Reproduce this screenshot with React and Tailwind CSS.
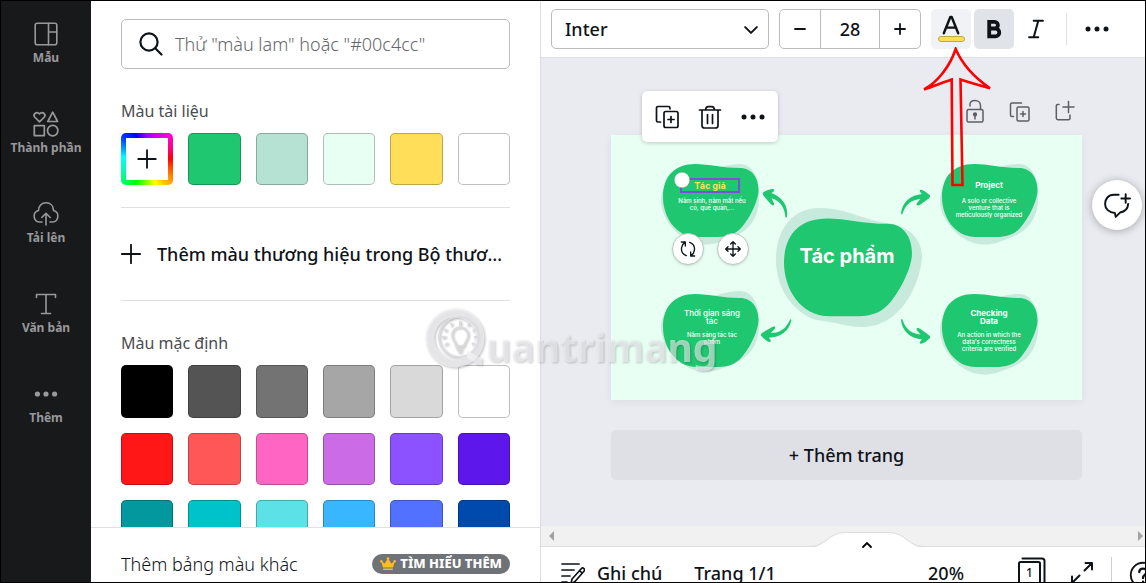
import React from "react";

const documentColors = ["#1fc770", "#b6e2d3", "#e8fff4", "#ffde59", "#ffffff"];

const defaultColors = [
  "#000000", "#545454", "#737373", "#a6a6a6", "#d9d9d9", "#ffffff",
  "#ff1616", "#ff5757", "#ff66c4", "#cb6ce6", "#8c52ff", "#5e17eb",
  "#03989e", "#00c2cb", "#5ce1e6", "#38b6ff", "#5271ff", "#004aad",
];

const Icon = ({ size = 24, stroke = 1.6, className = "", children }) => (
  <svg
    width={size}
    height={size}
    viewBox="0 0 24 24"
    fill="none"
    stroke="currentColor"
    strokeWidth={stroke}
    strokeLinecap="round"
    strokeLinejoin="round"
    className={`shrink-0 ${className}`}
    aria-hidden="true"
  >
    {children}
  </svg>
);

const Dots = ({ size, r = 2.4, gap = 8.8 }) => (
  <Icon size={size} className="overflow-visible">
    <g fill="currentColor" stroke="none">
      <circle cx={12 - gap} cy="12" r={r} />
      <circle cx="12" cy="12" r={r} />
      <circle cx={12 + gap} cy="12" r={r} />
    </g>
  </Icon>
);

const DuplicateIcon = ({ stroke }) => (
  <Icon stroke={stroke}>
    <path d="M5.500 17H3a1.500 1.500 0 0 1-1.500-1.500V3A1.500 1.500 0 0 1 3 1.500h10.500A1.500 1.500 0 0 1 15 3v.8" />
    <rect x="9" y="6.500" width="14" height="16" rx="1.800" />
    <path d="M16 11.500v6M13 14.500h6" />
  </Icon>
);

const navItems = [
  {
    label: "Mẫu",
    icon: (
      <Icon stroke={1.6}>
        <rect x="1.200" y="1.200" width="21.600" height="21.600" rx="2" />
        <path d="M14.500 1.200v21.600M14.500 10h8.300" />
      </Icon>
    ),
  },
  {
    label: "Thành phần",
    icon: (
      <Icon stroke={1.7} className="overflow-visible">
        <path d="M5.500 9.800 0.600 5C-1.300 2.400 2.600-1.400 5.500 1.900 8.400-1.400 12.300 2.400 10.400 5z" />
        <path d="M18.700 0.200 23.600 9.500H13.800z" />
        <rect x="0.300" y="13.600" width="10" height="10" />
        <circle cx="18.700" cy="18.600" r="5.200" />
      </Icon>
    ),
  },
  {
    label: "Tải lên",
    icon: (
      <Icon stroke={1.6} className="overflow-visible">
        <path d="M8 20H5.500a5.800 5.800 0 0 1-1-11.400C4.500 4 7.500 .8 12 .8s7.500 3.200 7.500 7.800a5.800 5.800 0 0 1-1 11.400H16" />
        <path d="M12 23V12M7.800 15.500 12 11.300l4.200 4.200" />
      </Icon>
    ),
  },
  {
    label: "Văn bản",
    icon: (
      <Icon stroke={1.6}>
        <path d="M2.500 5.500V2.500h19v3M12 2.500v19M7.500 21.500h9" />
      </Icon>
    ),
  },
  { label: "Thêm", icon: <Dots r={2.6} gap={8.6} /> },
];

const Sidebar = () => (
  <nav className="w-[90px] shrink-0 bg-[#18191b] text-[#98999b]">
    {navItems.map((item) => (
      <a
        key={item.label}
        href="#"
        className="flex h-[90px] flex-col items-center gap-0.5 pt-[21px] text-[12px] leading-5 font-bold whitespace-nowrap"
      >
        {item.icon}
        {item.label}
      </a>
    ))}
  </nav>
);

const Swatch = ({ color }) => (
  <button
    aria-label={color}
    className="aspect-square rounded-[5px] border border-black/25"
    style={{ backgroundColor: color }}
  />
);

const ColorPanel = () => (
  <section className="flex w-[450px] shrink-0 flex-col border-r border-[#dcdde1] bg-white">
    <div className="min-h-0 flex-1 overflow-hidden px-[30px] pt-[18px]">
      <label className="flex h-[50px] items-center gap-3 rounded-[5px] border border-[#babcbf] px-[17px]">
        <Icon stroke={2.2}>
          <circle cx="10" cy="10" r="8.600" />
          <path d="m16.500 16.500 6 6" />
        </Icon>
        <input
          type="text"
          aria-label="Tìm màu"
          placeholder={'Thử "màu lam" hoặc "#00c4cc"'}
          className="min-w-0 flex-1 text-[18px] font-light outline-none placeholder:text-[#65676b]"
        />
      </label>

      <h2 className="mt-8 text-[16px] leading-5 text-[#4b4c50]">Màu tài liệu</h2>
      <div className="mt-3 grid grid-cols-6 gap-[15px]">
        <button
          aria-label="Thêm màu"
          className="aspect-square rounded-[5px] bg-[conic-gradient(#a000ff,#ff00e0_45deg,#ff0000_90deg,#ff9500_130deg,#ffff00_160deg,#00ff00_205deg,#00ff90_235deg,#00ffff_275deg,#0030ff_315deg,#0000ff_335deg,#a000ff)] p-[5px]"
        >
          <span className="flex h-full items-center justify-center bg-white">
            <Icon size={20} stroke={2.2}>
              <path d="M12 1.500v21M1.500 12h21" />
            </Icon>
          </span>
        </button>
        {documentColors.map((color) => (
          <Swatch key={color} color={color} />
        ))}
      </div>

      <button className="mt-[22px] flex h-[94px] w-full items-center gap-4 border-y border-[#dfe0e2] text-left text-[18px] font-medium">
        <Icon size={20} stroke={2.2}>
          <path d="M12 1v22M1 12h22" />
        </Icon>
        <span className="truncate">Thêm màu thương hiệu trong Bộ thương hiệu</span>
      </button>

      <h2 className="mt-8 text-[16px] leading-5 text-[#4b4c50]">Màu mặc định</h2>
      <div className="mt-3 grid grid-cols-6 gap-[15px]">
        {defaultColors.map((color) => (
          <Swatch key={color} color={color} />
        ))}
      </div>
    </div>

    <div className="flex h-[55px] shrink-0 items-start justify-between border-t border-[#dfe0e2] px-[30px] pt-6">
      <span className="text-[18px] leading-6 font-light">Thêm bảng màu khác</span>
      <button className="mt-0.5 flex h-5 items-center gap-1 rounded-full bg-[#6f7377] px-2 text-[13px] font-extrabold whitespace-nowrap text-white">
        <svg width="16" height="14" viewBox="0 0 16 14" fill="#fdbc1f" aria-hidden="true">
          <path d="M3 10.500 1.200 4.200l3.600 2.200L8 1l3.200 5.400 3.600-2.200L13 10.500zM3.200 11.500h9.600V13H3.200z" />
          <circle cx="8" cy="1.500" r="1.300" />
          <circle cx="1.300" cy="4.200" r="1.200" />
          <circle cx="14.700" cy="4.200" r="1.200" />
        </svg>
        TÌM HIỂU THÊM
      </button>
    </div>
  </section>
);

const Toolbar = () => (
  <header className="relative z-20 flex h-[57px] shrink-0 items-center border-b border-[#dfe0e4] bg-white px-[10px]">
    <div className="relative w-[218px]">
      <select
        aria-label="Phông chữ"
        className="h-10 w-full appearance-none rounded-[5px] border border-[#babcbf] bg-white px-[13px] text-[18px] font-medium"
      >
        <option>Inter</option>
      </select>
      <Icon size={14} stroke={3.4} className="pointer-events-none absolute top-[14px] right-[11px]">
        <path d="m2 7 10 10L22 7" />
      </Icon>
    </div>

    <div className="ml-[10px] flex h-10 w-[142px] rounded-[5px] border border-[#babcbf]">
      <button aria-label="Giảm" className="flex w-10 items-center justify-center">
        <Icon size={12} stroke={3.6}>
          <path d="M2 12h20" />
        </Icon>
      </button>
      <input
        type="text"
        aria-label="Cỡ chữ"
        defaultValue="28"
        className="min-w-0 flex-1 border-x border-[#babcbf] text-center text-[18px] font-medium"
      />
      <button aria-label="Tăng" className="flex w-10 items-center justify-center">
        <Icon size={12} stroke={3.6}>
          <path d="M2 12h20M12 2v20" />
        </Icon>
      </button>
    </div>

    <div className="relative ml-[10px]">
      <button
        aria-label="Màu chữ"
        className="flex size-10 flex-col items-center rounded-[5px] bg-[#f1f2f5] pt-1.5"
      >
        <svg width="18" height="20" viewBox="0 0 18 20" fill="none" stroke="currentColor" strokeWidth="2.400" strokeLinecap="round" strokeLinejoin="round" aria-hidden="true">
          <path d="M1.800 18.300 8.300 2h1.400l6.500 16.300M4.200 12.600h9.600" />
        </svg>
        <span className="mt-px h-1.5 w-[27px] rounded-full border border-[#bfa743] bg-[#ffde59]" />
      </button>
      {/* Callout arrow pointing at the text colour button */}
      <svg
        width="72"
        height="142"
        viewBox="0 0 72 142"
        fill="none"
        stroke="#ff0000"
        strokeWidth="2.600"
        className="pointer-events-none absolute top-[38px] -left-2.5"
        aria-hidden="true"
      >
        <path d="M34.700 2C29 19 17 35 3 42.500 13 39 22 35.500 30.700 32.500L31.500 138H41.500L39.500 32.500C50 36 59 38.500 69 41.200 57 33 42 19 34.700 2z" />
      </svg>
    </div>
    <button aria-label="Đậm" className="ml-[3px] flex size-10 items-center justify-center rounded-[5px] bg-[#e0e3e7]">
      <svg width="18" height="20" viewBox="0 0 18 20" fill="none" stroke="currentColor" strokeWidth="3.800" aria-hidden="true">
        <path d="M4.200 2.900h5.400a3.300 3.300 0 0 1 0 6.600H4.200zM4.200 9.500h6.200a3.900 3.900 0 0 1 0 7.800H4.200z" />
      </svg>
    </button>
    <button aria-label="Nghiêng" className="ml-0.5 flex size-10 items-center justify-center">
      <Icon size={22} stroke={2.2}>
        <path d="M9.500 3h10M4.500 21h10M14.500 3 9.500 21" />
      </Icon>
    </button>
    <span className="mx-[10px] h-8 w-px bg-[#e0e1e4]" />
    <button aria-label="Tùy chọn khác" className="flex h-10 w-10 items-center justify-center">
      <Dots r={2.5} gap={9} />
    </button>
  </header>
);

const Blob = ({ x, y, shadowY = 0 }) => (
  <g transform={`translate(${x} ${y})`}>
    <path
      fill="#c8eadd"
      transform={`translate(0 ${shadowY})`}
      d="M-2 36C-2 20 10 10 40 8 55 4 65 0 77 0 90 0 97 15 96 34 96 52 88 66 70 73 58 78 52 80.500 42 80.500 20 80.500-2 58-2 36z"
    />
    <path
      fill="#1fc770"
      d="M0 33C0 12 12 0 32 0 46 0 60 4 77 4 89 4 95.500 14 95.500 26 95.500 36 88 51 82 59 75 69 68 73 54 73H34C12 73 0 52 0 33z"
    />
  </g>
);

const Arrow = ({ transform }) => (
  <path
    transform={transform}
    fill="#1fc770"
    d="M290 78.500C291 67 300 60 311 59L309.500 57.500C308 55.500 309 54 311 55 314 56 317 58.500 319 60.500 319.500 62 318.500 63 317 64 314 66 310.500 69 307.500 70.500 305.500 71 305 69.500 306 68L309.500 64C301 64.500 295 69 291.800 78Q291 80.500 290 78.500z"
  />
);

const Lines = ({ x, y, step, lines, className }) => (
  <text textAnchor="middle" className={className}>
    {lines.map((line, i) => (
      <tspan key={line} x={x} y={y + i * step}>
        {line}
      </tspan>
    ))}
  </text>
);

const MindMap = () => (
  <svg
    viewBox="0 0 471 265"
    className="block w-full bg-[#e8fff4] font-[Inter,sans-serif] shadow-[0_2px_8px_rgba(0,0,0,0.06)]"
  >
    <Blob x={52} y={29} />
    <Blob x={331} y={29} />
    <Blob x={52} y={159} shadowY={-3} />
    <Blob x={331} y={159} />

    <path
      fill="#c8eadd"
      d="M165 125C165 94 182 73 208 73 237 73 252 86 283 89 303 95 311 108 311 122 309 152 288 192 252 192 235 192 225 187 205 185 180 176 165 152 165 125z"
    />
    <g transform="translate(173 83.500) scale(1.340)">
      <path
        fill="#1fc770"
        d="M0 33C0 12 12 0 32 0 46 0 60 4 77 4 89 4 95.500 14 95.500 26 95.500 36 88 51 82 59 75 69 68 73 54 73H34C12 73 0 52 0 33z"
      />
    </g>

    <Arrow />
    <Arrow transform="matrix(1 0 0 -1 0 263.500)" />
    <Arrow transform="translate(152 58) rotate(14) scale(-1 1) translate(-319 -61)" />
    <Arrow transform="translate(150 200) rotate(5) scale(-1 -1) translate(-319 -61)" />

    <rect x="70" y="44" width="58" height="13" fill="none" stroke="#7d4fd6" strokeWidth="2" />
    <Lines x={99} y={54} step={8} lines={["Tác giả"]} className="fill-[#ffde59] text-[9px] font-bold" />
    <Lines x={101} y={68} step={7} lines={["Năm sinh, năm mất nếu", "có, quê quán,..."]} className="fill-white text-[6px] font-medium" />
    <Lines x={236} y={128} step={8} lines={["Tác phẩm"]} className="fill-white text-[20px] font-bold" />
    <Lines x={101} y={181} step={8} lines={["Thời gian sáng", "tác"]} className="fill-white text-[8px] font-medium" />
    <Lines x={101} y={202} step={7} lines={["Năm sáng tác tác", "phẩm"]} className="fill-white text-[6px] font-medium" />
    <Lines x={378} y={53} step={8} lines={["Project"]} className="fill-white text-[8px] font-bold" />
    <Lines x={378} y={68} step={7} lines={["A solo or collective", "venture that is", "meticulously organized"]} className="fill-white text-[6px] font-medium" />
    <Lines x={378} y={181} step={8} lines={["Checking", "Data"]} className="fill-white text-[8px] font-bold" />
    <Lines x={378} y={202} step={7} lines={["An action in which the", "data's correctness", "criteria are verified"]} className="fill-white text-[6px] font-medium" />
    <circle cx="71" cy="45" r="7.700" fill="#fff" stroke="#000" strokeOpacity="0.15" strokeWidth="0.800" />
  </svg>
);

const roundButton =
  "absolute flex size-8 items-center justify-center rounded-full border border-[#b9c9c2] bg-white shadow-sm";

const Canvas = () => (
  <div className="min-h-0 flex-1 overflow-hidden bg-[#eaebf0] pt-[41px] pr-[63px] pl-[70px]">
    <div className="flex justify-end gap-[21px] pr-[5px] pb-3 text-[#5d5f66]">
      <button aria-label="Khóa">
        <Icon stroke={1.5}>
          <rect x="4" y="10.500" width="16" height="12.500" rx="1.500" />
          <path d="M7 7V5.500C7 3 9 1.500 12 1.500s5.500 2 5.500 5v4M12 17v3" />
          <circle cx="12" cy="15.500" r="1.400" fill="currentColor" />
        </Icon>
      </button>
      <button aria-label="Nhân bản trang">
        <Icon stroke={1.5}>
          <path d="M5.500 17.500H4A1.500 1.500 0 0 1 2.500 16V5.500A1.500 1.500 0 0 1 4 4h9.500" />
          <rect x="9" y="8" width="12" height="14" rx="1.500" />
          <path d="M15 12.500v5M12.500 15h5" />
        </Icon>
      </button>
      <button aria-label="Thêm trang mới">
        <Icon stroke={1.5}>
          <path d="M6 5.500H4.500A1.200 1.200 0 0 0 3.300 6.700V19A1.700 1.700 0 0 0 5 20.700h10.500a1.500 1.500 0 0 0 1.500-1.500V16M15.500 2.500v11M10 8h11" />
        </Icon>
      </button>
    </div>

    <div className="relative">
      <MindMap />
      <div className="absolute -top-11 left-[31px] flex h-[51px] items-center gap-[19px] rounded-[5px] bg-white px-[13px] shadow-[0_1px_4px_rgba(0,0,0,0.2)]">
        <button aria-label="Nhân bản">
          <DuplicateIcon stroke={1.7} />
        </button>
        <button aria-label="Xóa">
          <Icon stroke={1.7}>
            <path d="M1.500 5h21M7.500 5c.3-2 .8-3.300 2.500-3.300h4c1.700 0 2.200 1.300 2.500 3.300M4 5v15.500A2.500 2.500 0 0 0 6.500 23h11a2.500 2.500 0 0 0 2.500-2.500V5M9.500 9.500v9M14.500 9.500v9" />
          </Icon>
        </button>
        <button aria-label="Khác">
          <Dots r={2.5} gap={9} />
        </button>
      </div>
      <button aria-label="Xoay" className={`${roundButton} top-[37%] left-[13%]`}>
        <Icon size={16} stroke={2}>
          <path d="M9.500 22C4 20 1.500 15 2.500 9.500 3 6.500 5 3.500 7.500 2M2 1.500h6v6M14.500 2c5.500 2 8 7 7 12.500-.5 3-2.500 6-5 7.500M22 22.500h-6v-6" />
        </Icon>
      </button>
      <button aria-label="Di chuyển" className={`${roundButton} top-[37%] left-[22.5%]`}>
        <Icon size={16} stroke={2}>
          <path d="M12 1v22M1 12h22M8.500 4.500 12 1l3.500 3.500M8.500 19.500 12 23l3.500-3.500M4.500 8.500 1 12l3.500 3.500M19.500 8.500 23 12l-3.500 3.500" />
        </Icon>
      </button>
    </div>

    <button className="mt-[30px] h-[50px] w-full rounded-[5px] bg-[#dfe0e6] text-[18px] font-medium">
      + Thêm trang
    </button>
  </div>
);

const BottomBar = () => (
  <footer className="shrink-0 bg-white font-medium">
    <div className="relative flex h-[21px] items-center justify-between border-b border-[#dcdde0] bg-[#f1f1f1] px-2 text-[#a3a3a3]">
      <svg width="5" height="10" viewBox="0 0 5 10" fill="currentColor" aria-hidden="true">
        <path d="M5 0v10L0 5z" />
      </svg>
      <svg width="5" height="10" viewBox="0 0 5 10" fill="currentColor" className="-mr-1.5" aria-hidden="true">
        <path d="M0 0v10l5-5z" />
      </svg>
      <button aria-label="Hiện trang" className="absolute inset-x-0 top-1.5 mx-auto w-28 pr-px text-black">
        <svg width="112" height="18" viewBox="0 0 112 18" fill="none" className="ml-6" aria-hidden="true">
          <path d="M0 15.500C14 15.500 18 .5 34 .5h44c16 0 20 15 34 15V18H0z" fill="#fff" />
          <path d="M0 14.500C14 14.500 18 .5 34 .5h44c16 0 20 14 34 14" stroke="#dcdde0" />
          <path d="m52 15 4-4 4 4" stroke="currentColor" strokeWidth="1.800" strokeLinecap="round" />
        </svg>
      </button>
    </div>
    <div className="flex h-[35px] items-start overflow-hidden pt-[14px] pl-5 text-[18px] leading-6 whitespace-nowrap">
      <button className="flex gap-3">
        <Icon stroke={1.7}>
          <path d="M1 3h17M1 9h12M1 15h8M1 21h5M10 23l1-5L20.500 7.500c1.500-1.500 4 .8 2.600 2.500L14 20.500zM18.500 9.500l2.500 2.500" />
        </Icon>
        Ghi chú
      </button>
      <span className="ml-8">Trang 1/1</span>
      <button className="ml-auto">20%</button>
      <button aria-label="Xem lưới" className="relative -mt-1 ml-[54px] h-8 w-7 text-[12px]">
        <svg width="28" height="32" viewBox="0 0 28 32" fill="none" stroke="currentColor" strokeWidth="2" className="absolute inset-0" aria-hidden="true">
          <rect x="1" y="5" width="21" height="26" rx="1.500" />
          <path d="M4.500 1.500H24A2.500 2.500 0 0 1 26.500 4v28" strokeLinecap="round" />
        </svg>
        <span className="absolute top-1 left-0 w-[23px] text-center">1</span>
      </button>
      <button aria-label="Toàn màn hình" className="ml-6">
        <Icon stroke={2}>
          <path d="M14.500 9.500 21.500 2.500M15.500 2h6.500v6.500M9.500 14.500 2.500 21.500M2 15.500V22h6.500" />
        </Icon>
      </button>
      <span className="-mt-1 ml-[17px] h-8 w-px shrink-0 bg-[#cfd0d3]" />
      <button aria-label="Trợ giúp" className="-mr-3 ml-[17px]">
        <Icon size={28} stroke={1.6}>
          <circle cx="12" cy="12" r="10.500" />
          <path d="M8.800 9.500c0-4 6.400-4 6.400-.2 0 2.400-3.200 2.500-3.200 5.200M12 17.800v.2" strokeWidth="2" />
        </Icon>
      </button>
    </div>
  </footer>
);

const Watermark = () => (
  <svg
    width="300"
    height="76"
    viewBox="0 0 300 76"
    className="pointer-events-none absolute top-[303px] left-[422px] z-30 drop-shadow-[1px_1px_1px_rgba(0,0,0,0.35)]"
    aria-hidden="true"
  >
    <g fill="none" stroke="#f4f4f6" strokeOpacity="0.7">
      <circle cx="32" cy="34" r="25" strokeWidth="9" />
      <g stroke="#dcdce0" strokeOpacity="1">
        <circle cx="36" cy="33" r="20" strokeWidth="1.500" />
        <path d="M33 42c0-4-4-6-4-11a8 8 0 0 1 16 0c0 5-4 7-4 11zM33 45h7M35 48h4" strokeWidth="1.500" />
        <path d="M37 17v4M28 19l1 3M46 19l-1 3M21 25l3 2M53 25l-3 2M19 33h4M55 33h-4M22 41l3-2M52 41l-3-2" strokeWidth="2" />
      </g>
      <path d="M44 51c5 0 8 6 15 7" strokeWidth="7" />
    </g>
    <text x="63" y="58" className="fill-[#f4f4f6]/60 font-['Noto_Sans',sans-serif] text-[39px] font-bold">
      uantrimang
    </text>
  </svg>
);

export default function App() {
  return (
    <div className="relative flex h-screen overflow-hidden border border-black bg-white font-['Noto_Sans',sans-serif] text-[#0e1318]">
      <Sidebar />
      <ColorPanel />
      <main className="relative flex min-w-0 flex-1 flex-col">
        <Toolbar />
        <Canvas />
        <BottomBar />
        <button
          aria-label="Thêm nhận xét"
          className="absolute top-[179px] right-[3px] flex size-[50px] items-center justify-center rounded-full bg-white shadow-[0_1px_8px_rgba(0,0,0,0.3)]"
        >
          <Icon size={26} stroke={1.8} className="overflow-visible">
            <path d="M13.500 2.500H9C4 2.500 1 6.500 1 11c0 4.500 3.500 8 9 8.300l.8 3.700 4-4c4.200-.7 7.200-3.500 7.500-8M20 2v8M16 6h8" />
          </Icon>
        </button>
      </main>
      <Watermark />
    </div>
  );
}
